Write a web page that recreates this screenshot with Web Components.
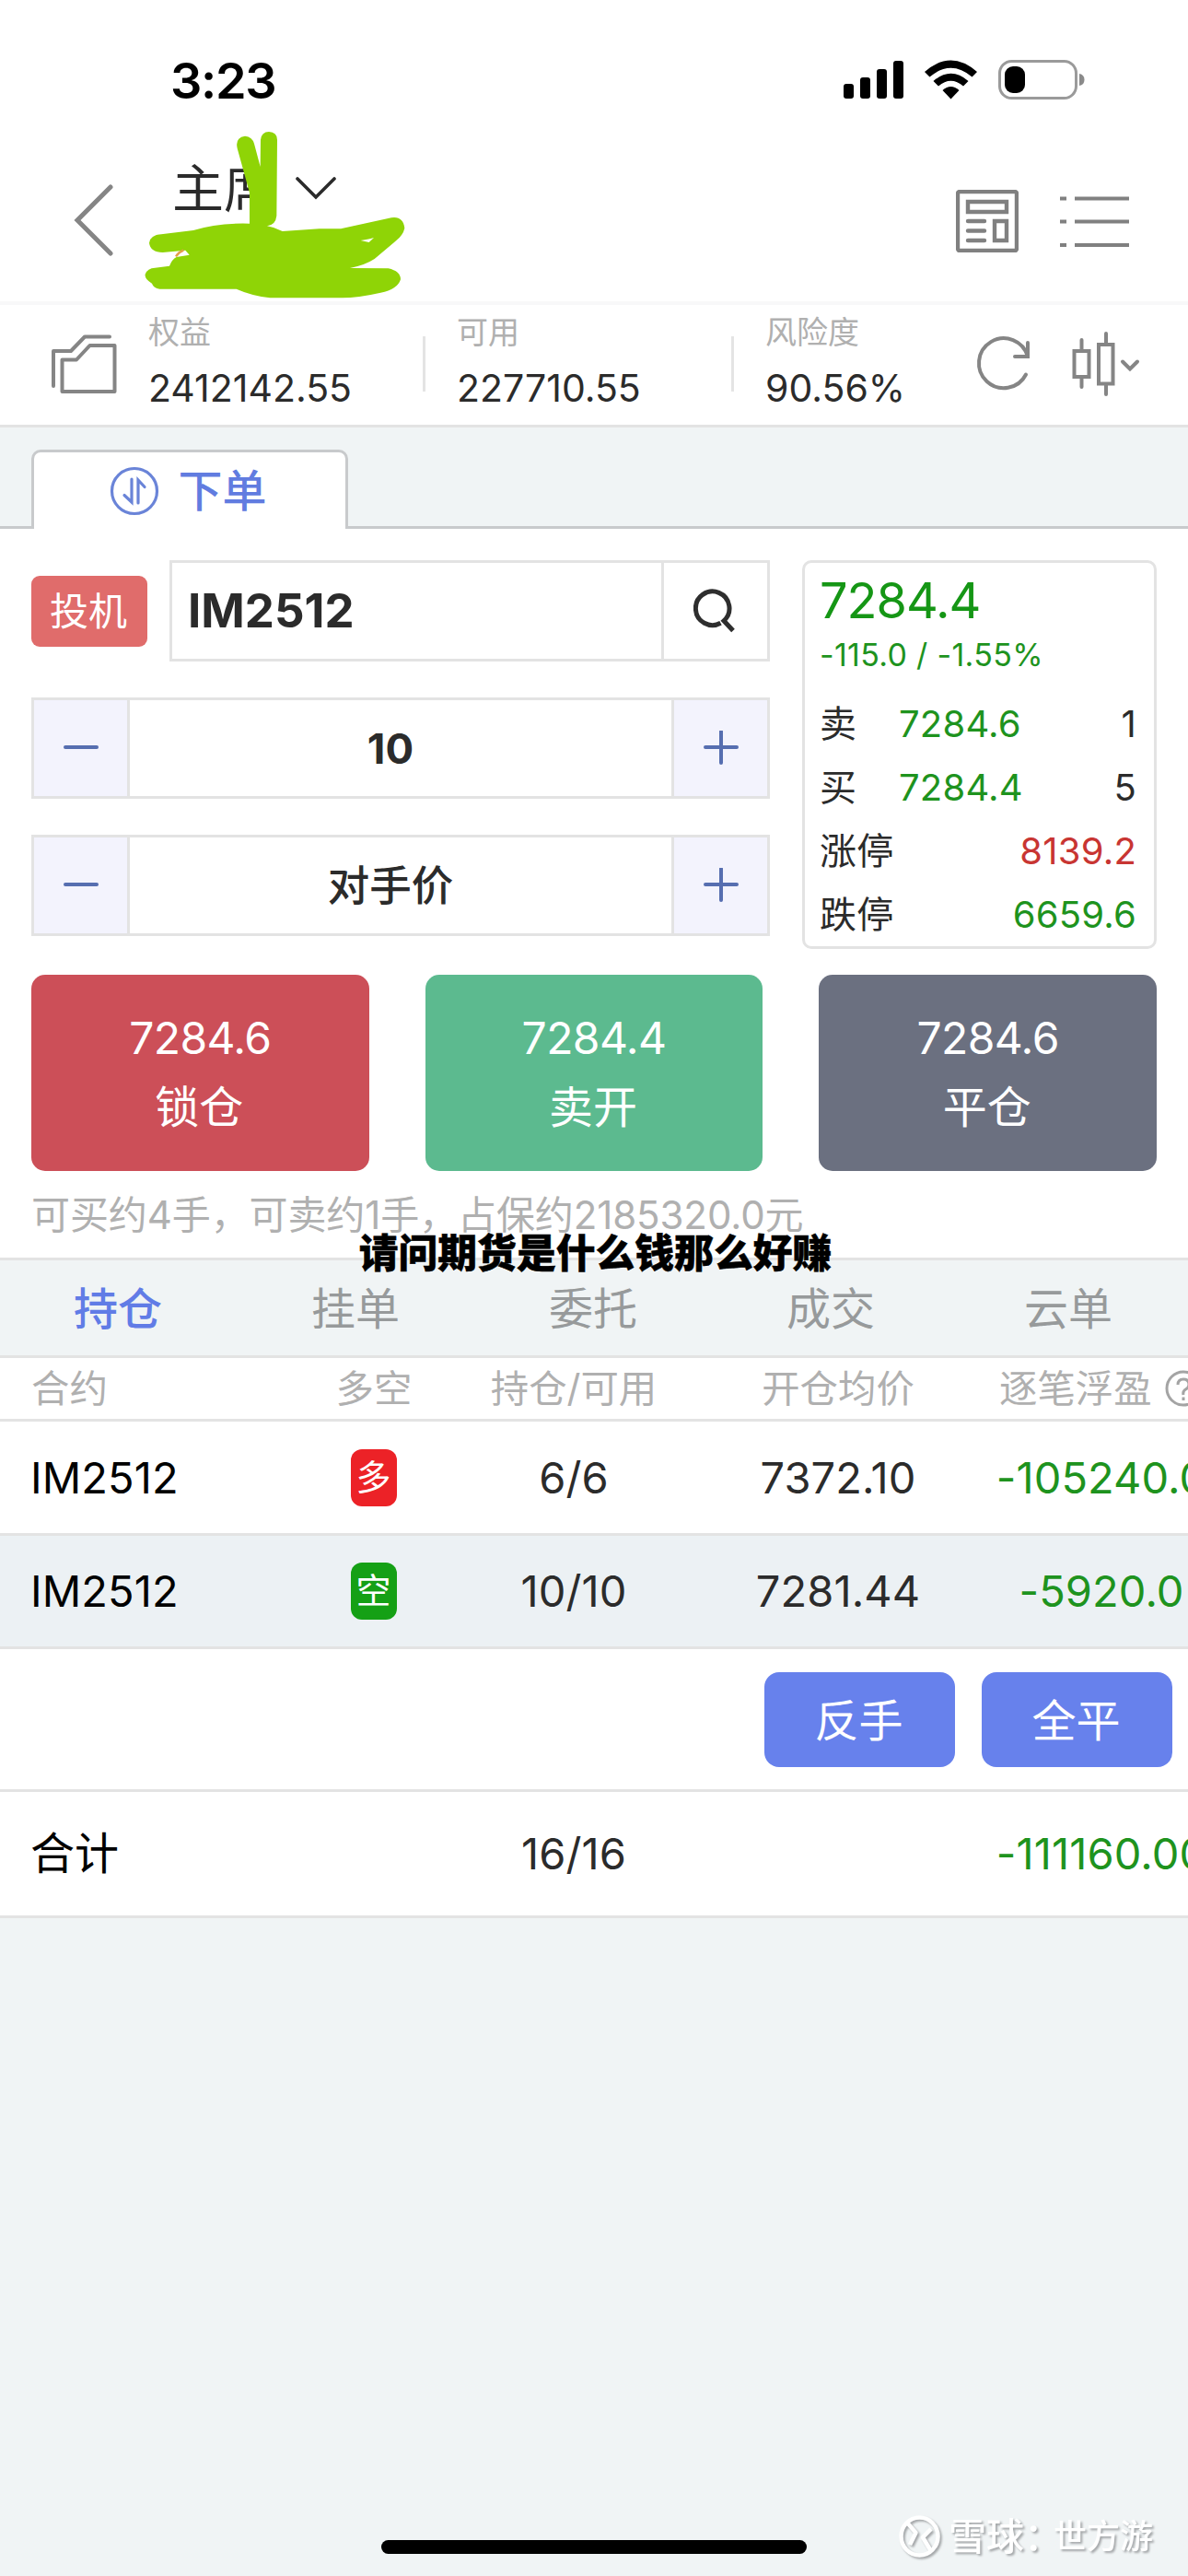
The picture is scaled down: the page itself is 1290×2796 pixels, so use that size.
<!DOCTYPE html>
<html lang="zh-CN">
<head>
<meta charset="utf-8">
<title>下单</title>
<style>
  body {
    margin: 0;
    width: 1290px;
    height: 2796px;
    overflow: hidden;
    background: #f0f4f5;
    color: #2b2b2b;
    font-family: Inter, "Noto Sans CJK SC", sans-serif;
  }
</style>
</head>
<body>
<trade-app></trade-app>

<script>
class BaseElement extends HTMLElement {
  constructor() {
    super();
    this.attachShadow({ mode: "open" });
    this.shadowRoot.innerHTML = `
      <style>
        :host{ display:block; box-sizing:border-box; }
        *{ box-sizing:border-box; }
        svg{ display:block; flex:none; }
      </style>
      ${this.render()}
    `;
  }

  render() {
    return "<slot></slot>";
  }
}

class StatusBar extends BaseElement {
  render() {
    return `
      <style>
        :host{
          display:flex;
          height:148px;
          padding:57px 112px 0 185px;
          justify-content:space-between;
          align-items:flex-start;
          color:#000;
        }
        #time{
          font-size:54px;
          font-weight:600;
          line-height:62px;
          letter-spacing:-1.3px;
        }
      </style>
      <span id="time"><slot></slot></span>
      <svg width="262" height="62" viewBox="916 57 262 62">
        <rect x="916" y="91" width="11" height="16" rx="3"/>
        <rect x="934" y="84" width="11" height="23" rx="3"/>
        <rect x="952" y="75" width="11" height="32" rx="3"/>
        <rect x="970" y="66" width="11" height="41" rx="3"/>
        <path d="M1004 78Q1032.500 53 1061 78L1055.500 83.500Q1032.500 64 1009.500 83.500Z"/>
        <path d="M1013.500 88Q1032.500 71.500 1051.500 88L1046 93.500Q1032.500 82 1019 93.500Z"/>
        <path d="M1023.500 98Q1032.500 90 1041.500 98L1032.500 107.500Z"/>
        <rect x="1085.500" y="66.500" width="83" height="40" rx="13" fill="none" stroke="#9a9a9a" stroke-width="3"/>
        <rect x="1091" y="72" width="22" height="29" rx="9"/>
        <path d="M1172 80Q1177.500 81 1177.500 86.500T1172 93Z" fill="#8a8a8a"/>
      </svg>
    `;
  }
}

class PageHeader extends BaseElement {
  render() {
    return `
      <style>
        :host{
          display:flex;
          height:183px;
          padding:5px 62px 0 79px;
          align-items:center;
          position:relative;
          border-bottom:4px solid #f8f8f9;
        }
        #title{
          display:flex;
          align-self:flex-start;
          align-items:center;
          gap:20px;
          margin:23px auto 0 62px;
          font-size:56px;
          line-height:58px;
        }
        #tools{ display:flex; gap:44px; }
        #mark{ position:absolute; left:140px; top:-17px; }
      </style>
      <svg width="46" height="84" viewBox="0 0 46 84" fill="none" stroke="#858585" stroke-width="5" stroke-linecap="round">
        <path d="M41 5L5 41L41 77"/>
      </svg>
      <div id="title">
        <slot></slot>
        <svg width="46" height="28" viewBox="0 0 46 28" fill="none" stroke="#2b2b2b" stroke-width="3.600" stroke-linecap="round">
          <path d="M4 3L24 23L44 3"/>
        </svg>
      </div>
      <div id="tools">
        <svg width="68" height="68" viewBox="0 0 68 68" fill="none" stroke="#808080" stroke-width="4.400" stroke-linecap="round">
          <rect x="2" y="2" width="64" height="64" rx="2"/>
          <path d="M13 13H55V24H13Z M42 34H55V55H42Z M13 34H31 M13 44.500H31 M13 55H31"/>
        </svg>
        <svg width="78" height="68" viewBox="0 0 78 68" fill="none" stroke="#808080" stroke-width="4.200">
          <path d="M1 9.500H8 M17 9.500H76 M1 34.500H8 M17 34.500H76 M1 60H8 M17 60H76"/>
        </svg>
      </div>
      <svg id="mark" width="320" height="200" viewBox="0 0 960 600">
        <path fill="#8fd406" d="M105 370L210 357Q290 332 393 335L393 235L353 90Q345 55 378 50Q402 52 408 75L428 150L429 62Q432 36 456 36Q483 38 483 62L481 310Q478 340 450 343Q475 347 500 360L620 352L690 352L855 316Q893 310 898 350Q893 375 865 395L800 450Q770 470 720 480L845 481Q885 490 885 517Q875 550 820 560Q740 578 690 577L460 577Q400 570 350 548L100 548Q80 545 75 530Q50 515 53 500Q60 480 85 479L132 473Q140 452 155 444L197 437L184 422L110 429Q70 428 66 398Q70 372 105 370Z"/>
        <path fill="none" stroke="#e2a04a" stroke-width="7" d="M153 442Q162 428 178 422"/>
        <path fill="#fff" d="M755 390Q785 386 798 381L782 396Z"/>
      </svg>
    `;
  }
}

class AccountItem extends BaseElement {
  render() {
    return `
      <style>
        :host{ width:335px; padding-top:9px; position:relative; white-space:nowrap; }
        #label{ font-size:34px; line-height:42px; color:#b0b0b0; }
        #value{ font-size:41px; line-height:44px; margin-top:17px; letter-spacing:0; }
        :host([divided])::after{
          content:"";
          position:absolute;
          right:34px;
          top:34px;
          width:3px;
          height:60px;
          background:#e4e4e4;
        }
      </style>
      <div id="label"><slot name="label"></slot></div>
      <div id="value"><slot></slot></div>
    `;
  }
}

class AccountBar extends BaseElement {
  render() {
    return `
      <style>
        :host{
          display:flex;
          height:133px;
          padding-left:54px;
          border-bottom:3px solid #e3e3e3;
        }
        #folder{ margin:31px 33px 0 0; }
        #tools{ margin:28px 0 0 -107px; }
      </style>
      <svg id="folder" width="74" height="68" viewBox="54 362 74 68" fill="none" stroke="#858585" stroke-width="4" stroke-linejoin="round" stroke-linecap="round">
        <path d="M58 419V381H77L92 365.500H119"/>
        <path d="M67.500 425V390.500H83L97.500 375H124.500V425Z"/>
      </svg>
      <slot></slot>
      <svg id="tools" width="182" height="74" viewBox="1061 358 182 74" fill="none" stroke="#858585" stroke-width="4" stroke-linecap="round">
        <path d="M1116 405.500A27 27 0 1 1 1118 386"/>
        <path d="M1118 371V386H1104"/>
        <path d="M1168.500 380H1184.500V408H1168.500Z M1176.500 368V380 M1176.500 408V419"/>
        <path d="M1195 373H1210.500V415.500H1195Z M1203 361V373 M1203 415.500V427"/>
        <path d="M1221 391.500L1229 399.500L1237 391.500"/>
      </svg>
    `;
  }
}

class TabStrip extends BaseElement {
  render() {
    return `
      <style>
        :host{
          display:flex;
          height:110px;
          padding:24px 34px 0;
          border-bottom:3px solid #c8cacc;
          background:#f0f4f5;
        }
        #tab{
          display:flex;
          width:344px;
          height:86px;
          align-items:center;
          justify-content:center;
          gap:20px;
          border:3px solid #c8cacc;
          border-bottom:none;
          border-radius:10px 10px 0 0;
          background:#fff;
          color:#617ce0;
          font-size:48px;
          font-weight:500;
          line-height:56px;
          padding:1px 3px 0 0;
        }
      </style>
      <div id="tab">
        <svg width="54" height="54" viewBox="0 0 54 54" fill="none" stroke="#6a84d8" stroke-width="3.200" stroke-linecap="round">
          <circle cx="27" cy="27" r="24.500"/>
          <path d="M24 14V39L16 31.500 M31 40V15L38 22.500"/>
        </svg>
        <slot></slot>
      </div>
    `;
  }
}

class ContractField extends BaseElement {
  render() {
    return `
      <style>
        :host{ display:flex; height:110px; align-items:center; gap:24px; }
        #kind{
          width:126px;
          height:77px;
          border-radius:9px;
          background:#e06c6b;
          color:#fff;
          font-size:42px;
          line-height:77px;
          text-align:center;
          padding-right:2px;
        }
        #box{
          display:flex;
          flex:1;
          height:110px;
          border:3px solid #e3e3e3;
        }
        #code{
          flex:1;
          padding-left:17px;
          font-size:51px;
          font-weight:700;
          line-height:104px;
          letter-spacing:0;
        }
        #find{
          display:flex;
          width:115px;
          border-left:3px solid #e3e3e3;
          align-items:center;
          justify-content:center;
        }
      </style>
      <div id="kind"><slot name="kind"></slot></div>
      <div id="box">
        <div id="code"><slot></slot></div>
        <div id="find">
          <svg width="48" height="48" viewBox="0 0 48 48" fill="none" stroke="#2e2e2e" stroke-width="5">
            <path d="M29.500 37.300A18.300 18.300 0 1 1 33 34.800L43 45.500"/>
          </svg>
        </div>
      </div>
    `;
  }
}

class StepField extends BaseElement {
  render() {
    return `
      <style>
        :host{
          display:flex;
          height:110px;
          border:3px solid #e3e3e3;
          color:#2b2b2b;
        }
        .step{
          display:flex;
          width:104px;
          align-items:center;
          justify-content:center;
          background:#f3f3fd;
          border-right:3px solid #e3e3e3;
        }
        .step:last-child{ border-right:none; border-left:3px solid #e3e3e3; }
        #value{
          flex:1;
          text-align:center;
          font-size:45.500px;
          font-weight:var(--weight, 700);
          line-height:106px;
          padding-right:22px;
        }
      </style>
      <div class="step">
        <svg width="38" height="38" viewBox="0 0 38 38" stroke="#566eb0" stroke-width="4" stroke-linecap="round">
          <path d="M2 18H36"/>
        </svg>
      </div>
      <div id="value"><slot></slot></div>
      <div class="step">
        <svg width="38" height="38" viewBox="0 0 38 38" stroke="#566eb0" stroke-width="4" stroke-linecap="round">
          <path d="M2 18H36M19 1V35"/>
        </svg>
      </div>
    `;
  }
}

class QuoteRow extends BaseElement {
  render() {
    return `
      <style>
        :host{
          display:flex;
          height:69px;
          line-height:70px;
          font-size:40px;
          letter-spacing:0.2px;
        }
        #label{ min-width:86px; }
        #end{ margin-left:auto; }
        ::slotted(.down){ color:#1e931e; }
        ::slotted(.up){ color:#c83532; }
      </style>
      <span id="label"><slot name="label"></slot></span>
      <slot></slot>
      <span id="end"><slot name="end"></slot></span>
    `;
  }
}

class QuoteCard extends BaseElement {
  render() {
    return `
      <style>
        :host{
          height:422px;
          padding:11px 19px 0 16px;
          border:3px solid #e3e3e3;
          border-radius:10px;
        }
        #last{ font-size:54px; line-height:60px; color:#159615; letter-spacing:-1px; }
        #change{ font-size:34px; line-height:58px; color:#1e931e; margin-bottom:11px; white-space:nowrap; letter-spacing:0.300px; }
      </style>
      <div id="last"><slot name="last"></slot></div>
      <div id="change"><slot name="change"></slot></div>
      <slot></slot>
    `;
  }
}

class OrderButton extends BaseElement {
  render() {
    return `
      <style>
        :host{
          height:213px;
          padding-top:34px;
          border-radius:15px;
          background:var(--bg);
          color:#fff;
          text-align:center;
          font-size:48px;
        }
        #price{ line-height:70px; letter-spacing:-0.600px; }
        #name{ line-height:80px; padding-right:2px; }
      </style>
      <div id="price"><slot name="price"></slot></div>
      <div id="name"><slot></slot></div>
    `;
  }
}

class OrderPanel extends BaseElement {
  render() {
    return `
      <style>
        :host{ background:#fff; padding:34px 34px 0; height:791px; }
        #top{ display:grid; grid-template-columns:802px 385px; gap:35px; }
        #fields{ display:grid; gap:39px; align-content:start; }
        #actions{
          display:grid;
          grid-template-columns:repeat(3, 1fr);
          gap:61px;
          margin-top:28px;
        }
        #hint{
          font-size:42px;
          line-height:95px;
          color:#b0b0b0;
          white-space:nowrap;
          letter-spacing:-0.1px;
        }
      </style>
      <div id="top">
        <div id="fields"><slot name="field"></slot></div>
        <slot name="quote"></slot>
      </div>
      <div id="actions"><slot name="action"></slot></div>
      <div id="hint"><slot name="hint"></slot></div>
    `;
  }
}

class ListTabs extends BaseElement {
  render() {
    return `
      <style>
        :host{
          display:grid;
          grid-template-columns:repeat(5, 258px);
          height:109px;
          background:#f0f4f5;
          border-top:3px solid #e3e3e3;
          border-bottom:3px solid #e3e3e3;
          font-size:48px;
          line-height:106px;
          text-align:center;
          color:#979a9b;
        }
        ::slotted(span){ padding-right:2px; }
        ::slotted([active]){ color:#617ce6; font-weight:500; }
      </style>
      <slot></slot>
    `;
  }
}

class PositionRow extends BaseElement {
  render() {
    return `
      <style>
        :host{
          display:grid;
          grid-template-columns:300px 212px 222px 352px 220px;
          height:var(--h, 124px);
          align-items:center;
          border-bottom:3px solid #e3e3e3;
          background:#fff;
          font-size:47px;
          line-height:60px;
          letter-spacing:0.100px;
          white-space:nowrap;
          overflow:hidden;
        }
        :host([selected]){ background:#ecf1f4; }
        :host([head]){ font-size:41.400px; color:#b0b0b0; letter-spacing:0; }
        div{ display:flex; justify-content:center; align-items:center; }
        #name{ justify-content:flex-start; padding-left:33px; color:#000; }
        :host([head]) #name{ color:inherit; padding-left:34px; }
        #profit{ color:#1e931e; }
        :host([head]) #profit{ color:inherit; justify-content:flex-start; gap:14px; margin-left:-1px; }
      </style>
      <div id="name"><slot name="name"></slot></div>
      <div><slot name="side"></slot></div>
      <div><slot name="amount"></slot></div>
      <div><slot name="price"></slot></div>
      <div id="profit"><slot name="profit"></slot></div>
    `;
  }
}

class SideBadge extends BaseElement {
  render() {
    return `
      <style>
        :host{
          width:50px;
          height:62px;
          border-radius:12px;
          background:#ec2227;
          color:#fff;
          font-size:38px;
          line-height:60px;
          text-align:center;
          letter-spacing:0;
          padding-right:1px;
        }
        :host([short]){ background:#15a015; }
      </style>
      <slot></slot>
    `;
  }
}

class HelpIcon extends BaseElement {
  render() {
    return `
      <style>:host{ flex:none; }</style>
      <svg width="40" height="40" viewBox="0 0 40 40" fill="none" stroke="#a4a4a4" stroke-width="3">
        <circle cx="20" cy="20" r="18"/>
        <path d="M14 16Q14 10 20 10T26 16Q26 19 22.500 21T20 27M20 29.500V33"/>
      </svg>
    `;
  }
}

class RowActions extends BaseElement {
  render() {
    return `
      <style>
        :host{
          display:flex;
          height:155px;
          padding:25px 17px 0;
          justify-content:flex-end;
          gap:29px;
          background:#fff;
          border-bottom:3px solid #e3e3e3;
        }
        ::slotted(button){
          width:207px;
          height:103px;
          padding:0 2px 6px 0;
          border:none;
          border-radius:16px;
          background:#6781ec;
          color:#fff;
          font:inherit;
          font-size:48px;
        }
      </style>
      <slot></slot>
    `;
  }
}

// caption laid over the boundary between the order panel and the list
class FloatCaption extends BaseElement {
  render() {
    return `
      <style>
        :host{
          position:absolute;
          left:0;
          top:1336px;
          width:1293px;
          text-align:center;
          font-size:42.800px;
          font-weight:900;
          line-height:50px;
          color:#000;
          -webkit-text-stroke:0.500px #000;
          text-shadow:0 0 2px #fff, 0 0 2px #fff;
        }
      </style>
      <slot></slot>
    `;
  }
}

class HomeIndicator extends BaseElement {
  render() {
    return `
      <style>
        :host{
          position:absolute;
          left:414px;
          top:2757px;
          width:462px;
          height:15px;
          border-radius:8px;
          background:#000;
        }
      </style>
    `;
  }
}

class WaterMark extends BaseElement {
  render() {
    return `
      <style>
        :host{
          position:absolute;
          left:975px;
          top:2728px;
          display:flex;
          align-items:center;
          color:#fff;
          font-size:36px;
          font-weight:500;
          line-height:50px;
          white-space:nowrap;
          filter:drop-shadow(2px 2px 1px #a4a7a9);
        }
        #site{ font-size:41px; margin-left:7px; }
        #user{ margin-left:-9px; }
      </style>
      <svg width="48" height="50" viewBox="0 0 48 50" fill="none" stroke="#fff" stroke-width="4.500" stroke-linejoin="round">
        <ellipse cx="23.500" cy="25" rx="20" ry="20.500"/>
        <path d="M10 10L19.500 21L13 34M36 17L27 26L36 41"/>
      </svg>
      <span id="site"><slot name="site"></slot></span>
      <span id="user"><slot></slot></span>
    `;
  }
}

class TradeApp extends BaseElement {
  render() {
    return `
      <style>
        :host{ position:relative; width:1290px; height:2796px; overflow:hidden; }
        #top{ background:#fff; }
      </style>
      <div id="top">
        <status-bar>3:23</status-bar>
        <page-header>主席</page-header>
        <account-bar>
          <account-item divided><span slot="label">权益</span>2412142.55</account-item>
          <account-item divided><span slot="label">可用</span>227710.55</account-item>
          <account-item><span slot="label">风险度</span>90.56%</account-item>
        </account-bar>
      </div>
      <tab-strip>下单</tab-strip>
      <order-panel>
        <contract-field slot="field"><span slot="kind">投机</span>IM2512</contract-field>
        <step-field slot="field">10</step-field>
        <step-field slot="field" style="--weight:500">对手价</step-field>
        <quote-card slot="quote">
          <span slot="last">7284.4</span>
          <span slot="change">-115.0 / -1.55%</span>
          <quote-row><span slot="label">卖</span><span class="down">7284.6</span><span slot="end">1</span></quote-row>
          <quote-row><span slot="label">买</span><span class="down">7284.4</span><span slot="end">5</span></quote-row>
          <quote-row><span slot="label">涨停</span><span slot="end" class="up">8139.2</span></quote-row>
          <quote-row><span slot="label">跌停</span><span slot="end" class="down">6659.6</span></quote-row>
        </quote-card>
        <order-button slot="action" style="--bg:#cc4f58"><span slot="price">7284.6</span>锁仓</order-button>
        <order-button slot="action" style="--bg:#5cba8f"><span slot="price">7284.4</span>卖开</order-button>
        <order-button slot="action" style="--bg:#6b7080"><span slot="price">7284.6</span>平仓</order-button>
        <span slot="hint">可买约4手，可卖约1手，占保约2185320.0元</span>
      </order-panel>
      <list-tabs>
        <span active>持仓</span><span>挂单</span><span>委托</span><span>成交</span><span>云单</span>
      </list-tabs>
      <position-row head style="--h:69px">
        <span slot="name">合约</span>
        <span slot="side">多空</span>
        <span slot="amount">持仓/可用</span>
        <span slot="price">开仓均价</span>
        <span slot="profit">逐笔浮盈</span>
        <help-icon slot="profit"></help-icon>
      </position-row>
      <position-row>
        <span slot="name">IM2512</span>
        <side-badge slot="side">多</side-badge>
        <span slot="amount">6/6</span>
        <span slot="price">7372.10</span>
        <span slot="profit">-105240.0</span>
      </position-row>
      <position-row selected style="--h:123px">
        <span slot="name">IM2512</span>
        <side-badge slot="side" short>空</side-badge>
        <span slot="amount">10/10</span>
        <span slot="price">7281.44</span>
        <span slot="profit">-5920.0</span>
      </position-row>
      <row-actions>
        <button>反手</button>
        <button>全平</button>
      </row-actions>
      <position-row style="--h:137px">
        <span slot="name" style="font-size:48px">合计</span>
        <span slot="amount">16/16</span>
        <span slot="profit">-111160.00</span>
      </position-row>
      <float-caption>请问期货是什么钱那么好赚</float-caption>
      <home-indicator></home-indicator>
      <water-mark><span slot="site">雪球：</span>世方游</water-mark>
    `;
  }
}

customElements.define("status-bar", StatusBar);
customElements.define("page-header", PageHeader);
customElements.define("account-item", AccountItem);
customElements.define("account-bar", AccountBar);
customElements.define("tab-strip", TabStrip);
customElements.define("contract-field", ContractField);
customElements.define("step-field", StepField);
customElements.define("quote-row", QuoteRow);
customElements.define("quote-card", QuoteCard);
customElements.define("order-button", OrderButton);
customElements.define("order-panel", OrderPanel);
customElements.define("list-tabs", ListTabs);
customElements.define("position-row", PositionRow);
customElements.define("side-badge", SideBadge);
customElements.define("help-icon", HelpIcon);
customElements.define("row-actions", RowActions);
customElements.define("float-caption", FloatCaption);
customElements.define("home-indicator", HomeIndicator);
customElements.define("water-mark", WaterMark);
customElements.define("trade-app", TradeApp);
</script>
</body>
</html>
